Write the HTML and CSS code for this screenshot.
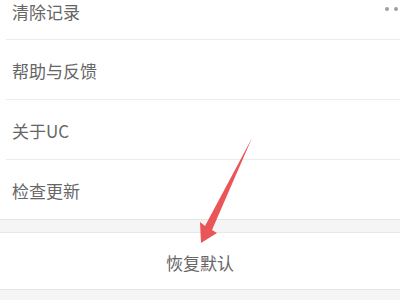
FILE: index.html
```html
<!DOCTYPE html>
<html lang="zh-CN">
<head>
<meta charset="utf-8">
<link rel="stylesheet" href="styles.css">
</head>
<body>
<div class="page">
  <div class="group">
    <div class="row first">
      <span class="label">清除记录</span>
      <span class="dots"><i></i><i></i></span>
    </div>
    <div class="row"><span class="label">帮助与反馈</span></div>
    <div class="row"><span class="label">关于UC</span></div>
    <div class="row last"><span class="label">检查更新</span></div>
  </div>
  <div class="band"></div>
  <div class="reset">恢复默认</div>
  <div class="band"></div>
  <svg class="arrow" width="400" height="300" viewBox="0 0 400 300">
    <polygon points="252,138 212,230 217,233 201,243 200,222 205,226" fill="#ea5658"/>
  </svg>
</div>
</body>
</html>
```
FILE: styles.css
```css
html, body {
  margin: 0;
  padding: 0;
  background: #fff;
}
body {
  width: 400px;
  height: 300px;
  overflow: hidden;
  font-family: "Noto Sans CJK SC", "Noto Sans", sans-serif;
}
.page {
  position: relative;
  width: 400px;
  height: 300px;
  overflow: hidden;
}
.group {
  margin-top: -20px;
  padding-left: 6px;
}
.row {
  display: flex;
  align-items: center;
  justify-content: space-between;
  border-bottom: 1px solid #ececec;
  padding-left: 6px;
  padding-top: 1px;
  box-sizing: border-box;
  height: 60px;
}
.row.first {
  height: 60px;
  padding-top: 3px;
}
.row.last {
  border-bottom: none;
  height: 59px;
}
.label {
  font-size: 17px;
  color: #666;
  line-height: 1;
}
.dots {
  display: flex;
  gap: 5px;
  align-self: flex-start;
  margin-top: 24px;
  margin-right: 2px;
}
.dots i {
  display: block;
  width: 4px;
  height: 4px;
  border-radius: 50%;
  background: #a0a0a0;
}
.band {
  height: 12px;
  background: #f5f5f5;
  border-top: 1px solid #e4e4e4;
  border-bottom: 1px solid #e8e8e8;
}
.reset {
  height: 56px;
  display: flex;
  align-items: center;
  justify-content: center;
  font-size: 17px;
  color: #666;
  padding-top: 3px;
  box-sizing: border-box;
}
.arrow {
  position: absolute;
  left: 0;
  top: 0;
}
```
